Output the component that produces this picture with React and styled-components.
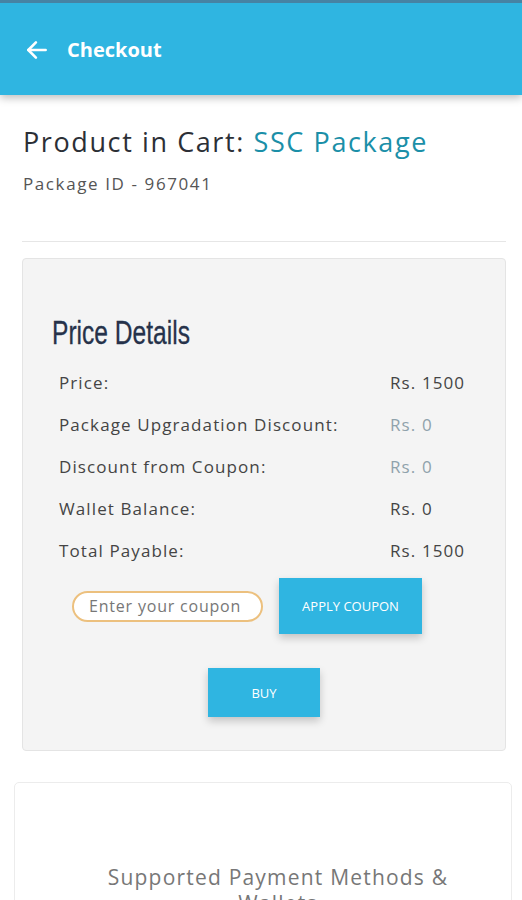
import React from 'react';
import styled, { createGlobalStyle } from 'styled-components';

const GlobalStyle = createGlobalStyle`
  body {
    margin: 0;
    background: #fff;
    font-family: 'Open Sans', 'Noto Sans', sans-serif;
  }
`;

const Page = styled.div`
  width: 522px;
  height: 900px;
  overflow: hidden;
`;

const Header = styled.header`
  height: 92px;
  border-top: 3px solid #4683a4;
  background: #2fb5e1;
  display: flex;
  align-items: center;
  padding-left: 24px;
  gap: 17px;
  box-shadow: 0 3px 8px rgba(0, 0, 0, 0.25);
  position: relative;
`;

const BackIcon = styled.svg`
  width: 26px;
  height: 26px;
  margin-top: 2px;
`;

const HeaderTitle = styled.h1`
  margin: 0;
  color: #fff;
  font-size: 20px;
  font-weight: 700;
`;

const Content = styled.main`
  padding: 29px 16px 0 23px;
`;

const ProductTitle = styled.h2`
  margin: 0;
  font-size: 27px;
  line-height: 36px;
  font-weight: 400;
  color: #2c2f36;
  letter-spacing: 1.6px;
`;

const Accent = styled.span`
  color: #1b8fa8;
`;

const PackageId = styled.div`
  margin-top: 13px;
  font-size: 17px;
  line-height: 22px;
  color: #555;
  letter-spacing: 1.6px;
`;

const Divider = styled.hr`
  margin: 46px 0 16px -1px;
  border: none;
  border-top: 1px solid #e6e6e6;
`;

const PriceCard = styled.section`
  margin-left: -1px;
  background: #f4f4f4;
  border: 1px solid #e4e4e4;
  border-radius: 4px;
  padding: 52px 37px 33px 29px;
`;

const CardTitle = styled.h3`
  margin: 0 0 16px;
  display: inline-block;
  font-family: 'Liberation Sans', sans-serif;
  font-size: 33px;
  line-height: 44px;
  font-weight: 400;
  color: #26324a;
  transform: scaleX(0.745);
  transform-origin: left center;
  -webkit-text-stroke: 0.3px #26324a;
`;

const PriceTable = styled.div`
  padding-left: 7px;
  display: grid;
  grid-template-columns: 1fr 78px;
  row-gap: 19px;
  font-size: 17px;
  line-height: 23px;
  color: #444;
  letter-spacing: 1.1px;
`;

const Value = styled.span`
  color: ${p => (p.muted ? '#8fa2ab' : '#444')};
  white-space: nowrap;
`;

const CouponRow = styled.div`
  margin-top: 16px;
  display: flex;
  align-items: center;
  padding-left: 20px;
  gap: 16px;
`;

const CouponInput = styled.input`
  width: 191px;
  height: 31px;
  box-sizing: border-box;
  border: 2px solid #ecc07e;
  border-radius: 16px;
  background: #fff;
  padding: 0 15px;
  font-family: inherit;
  font-size: 16px;
  letter-spacing: 0.8px;
  color: #333;
  outline: none;
  &::placeholder {
    color: #777;
  }
`;

const ActionButton = styled.button`
  width: ${p => p.width}px;
  height: ${p => p.height}px;
  border: none;
  background: #2fb5e1;
  color: #fff;
  font-family: 'Open Sans', sans-serif;
  font-size: 13px;
  text-transform: uppercase;
  box-shadow: 0 4px 8px rgba(0, 0, 0, 0.2);
  cursor: pointer;
`;

const BuyWrap = styled.div`
  margin-top: 34px;
  display: flex;
  justify-content: center;
  padding-left: 8px;
`;

const PaymentCard = styled.section`
  margin: 31px -6px 0 -9px;
  height: 200px;
  background: #fff;
  border: 1px solid #ececec;
  border-radius: 5px;
  padding: 81px 10px 0 40px;
  text-align: center;
`;

const PaymentTitle = styled.h3`
  margin: 0;
  font-size: 21px;
  font-weight: 400;
  color: #777;
  line-height: 26px;
  letter-spacing: 1.2px;
  padding: 0 30px;
`;

const rows = [
  { label: 'Price:', value: 'Rs. 1500' },
  { label: 'Package Upgradation Discount:', value: 'Rs. 0', muted: true },
  { label: 'Discount from Coupon:', value: 'Rs. 0', muted: true },
  { label: 'Wallet Balance:', value: 'Rs. 0' },
  { label: 'Total Payable:', value: 'Rs. 1500' },
];

export default function App() {
  return (
    <Page>
      <GlobalStyle />
      <Header>
        <BackIcon viewBox="0 0 24 24" fill="none" stroke="#fff" strokeWidth="2.4" strokeLinecap="round" strokeLinejoin="round">
          <path d="M20 12H4" />
          <path d="M11 5l-7 7 7 7" />
        </BackIcon>
        <HeaderTitle>Checkout</HeaderTitle>
      </Header>
      <Content>
        <ProductTitle>
          Product in Cart: <Accent>SSC Package</Accent>
        </ProductTitle>
        <PackageId>Package ID - 967041</PackageId>
        <Divider />
        <PriceCard>
          <CardTitle>Price Details</CardTitle>
          <PriceTable>
            {rows.map(r => (
              <React.Fragment key={r.label}>
                <span>{r.label}</span>
                <Value muted={r.muted}>{r.value}</Value>
              </React.Fragment>
            ))}
          </PriceTable>
          <CouponRow>
            <CouponInput placeholder="Enter your coupon" />
            <ActionButton width={143} height={56}>Apply Coupon</ActionButton>
          </CouponRow>
          <BuyWrap>
            <ActionButton width={112} height={49}>Buy</ActionButton>
          </BuyWrap>
        </PriceCard>
        <PaymentCard>
          <PaymentTitle>Supported Payment Methods &amp; Wallets</PaymentTitle>
        </PaymentCard>
      </Content>
    </Page>
  );
}
